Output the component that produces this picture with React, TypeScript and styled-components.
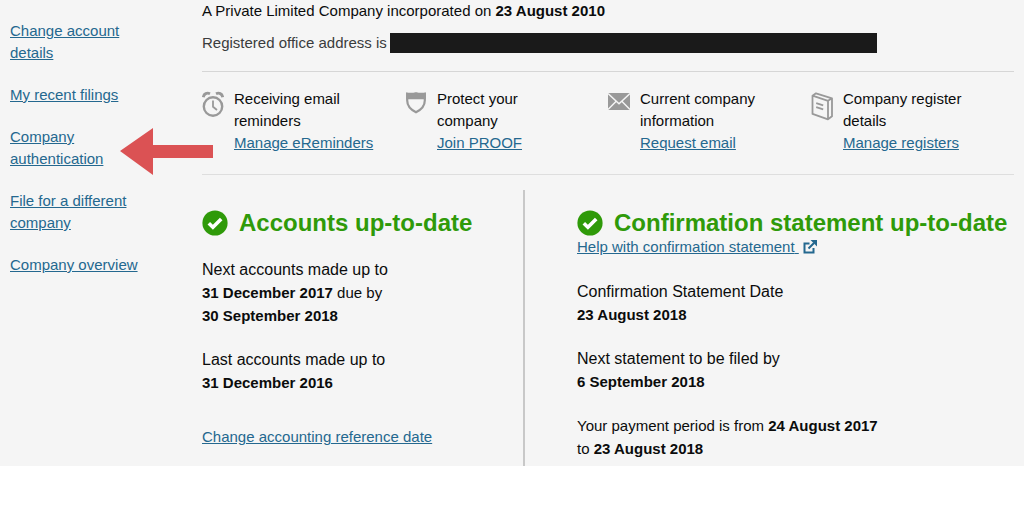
import type { ReactNode } from 'react';
import styled, { createGlobalStyle } from 'styled-components';

const GlobalStyle = createGlobalStyle`
  *, *::before, *::after { box-sizing: border-box; }
  body {
    margin: 0;
    background: #fff;
    color: #0b0c0c;
    font-family: "Liberation Sans", Arial, sans-serif;
    font-size: 15px;
    line-height: 22px;
  }
  p, h2, ul { margin: 0; padding: 0; }
`;

const Page = styled.div`
  display: flex;
  align-items: stretch;
  background: #f5f5f5;
`;

const Sidebar = styled.nav`
  flex: 0 0 202px;
  padding: 20px 63px 0 10px;
`;

const NavList = styled.ul`
  display: flex;
  flex-direction: column;
  gap: 20px;
  list-style: none;
`;

const NavItem = styled.li`
  position: relative;
`;

const Link = styled.a`
  color: #24688f;
  text-decoration: underline;
`;

const Pointer = styled.svg`
  position: absolute;
  left: 110px;
  top: 1px;
  width: 93px;
  height: 48px;
`;

const Main = styled.main`
  flex: 1;
  min-width: 0;
  padding-right: 10px;
`;

const Intro = styled.header`
  display: flex;
  flex-direction: column;
  gap: 10px;
  padding-bottom: 17px;
`;

const Address = styled.div`
  display: flex;
  align-items: center;
  gap: 3px;
  color: #3a3c3d;
  white-space: nowrap;
`;

const Redacted = styled.span`
  flex: 0 1 60%;
  height: 20px;
  background: #1a1a1a;
`;

const Services = styled.section`
  display: grid;
  grid-template-columns: repeat(4, 1fr);
  padding: 16px 0 20px;
  border-top: 1px solid #d6d6d6;
  border-bottom: 1px solid #dedede;
`;

const Service = styled.div`
  display: grid;
  grid-template-columns: 22px 1fr;
  gap: 10px;
  padding-right: 28px;
`;

const ServiceIcon = styled.svg`
  width: 22px;
  height: 34px;
  color: #999;
`;

const Filings = styled.div`
  display: grid;
  grid-template-columns: 321fr 491fr;
  margin-top: 15px;
`;

const Filing = styled.section<{ $divided?: boolean }>`
  padding: 20px 0 6px ${p => (p.$divided ? '52px' : '0')};
  border-left: ${p => (p.$divided ? '2px solid #c8c8c8' : '0')};
`;

const Status = styled.h2`
  display: flex;
  align-items: center;
  gap: 11px;
  color: #2f9a09;
  font-size: 24px;
  line-height: 26px;
  white-space: nowrap;
`;

const Tick = styled.svg`
  flex: none;
  width: 26px;
  height: 26px;
`;

const ExternalIcon = styled.svg`
  width: 14px;
  height: 14px;
  margin-left: 4px;
  vertical-align: -2px;
`;

const Details = styled.div`
  display: flex;
  flex-direction: column;
  gap: 21px;
  margin-top: 22px;
  line-height: 23px;
`;

const Label = styled.span`
  display: block;
  font-size: 16px;
`;

const Footnote = styled.p`
  margin-top: 32px;
`;

function StatusHeading({ children }: { children: ReactNode }) {
  return (
    <Status>
      <Tick viewBox="0 0 26 26" aria-hidden="true">
        <circle cx="13" cy="13" r="12.6" fill="#2f9a09" />
        <path d="M6.8 13.3l4.1 4 8.3-8.4" fill="none" stroke="#fff" strokeWidth="3.6" />
      </Tick>
      {children}
    </Status>
  );
}

const clock = (
  <g fill="none" stroke="currentColor">
    <circle cx="11" cy="18.5" r="9.2" strokeWidth="2.4" />
    <path d="M11 12.5v6.300l4 3.200" strokeWidth="1.800" />
    <path d="M1.300 9.200C1.800 5.600 5 4.400 8 5.800M20.700 9.200C20.200 5.600 17 4.400 14 5.800" strokeWidth="2.800" />
  </g>
);

const shield = (
  <g>
    <path
      d="M2.200 6.200c3 .8 5.800.2 8.800-.4 3 .6 5.800 1.200 8.800.4v6.300c0 5.500-3.800 9.300-8.800 11.700-5-2.400-8.800-6.200-8.800-11.700z"
      fill="none"
      stroke="currentColor"
      strokeWidth="2.200"
    />
    <path d="M1.200 4.200c3.200 1 6.600.5 9.800 0 3.200.5 6.600 1 9.800 0v7H1.200z" fill="currentColor" />
  </g>
);

const envelope = (
  <g>
    <path d="M0 5h22v17H0z" fill="currentColor" />
    <path
      d="M0 5.500l11 10.200 11-10.200M0 21.500l8.200-8.200M22 21.500l-8.200-8.200"
      fill="none"
      stroke="#f5f5f5"
      strokeWidth="1.500"
    />
  </g>
);

const book = (
  <g fill="none" stroke="currentColor" strokeWidth="1.800" strokeLinejoin="round">
    <path d="M1.500 7.700L17 12.800v18.500L1.500 25.900zM1.500 7.700L5 5.300l16 5v18l-4 3M17 12.800l4-2.500" />
    <path d="M5.200 15.200l7 2.200M5.200 19.200l7 2.200" />
  </g>
);

const services = [
  { icon: clock, text: 'Receiving email reminders', link: 'Manage eReminders' },
  { icon: shield, text: 'Protect your company', link: 'Join PROOF' },
  { icon: envelope, text: 'Current company information', link: 'Request email' },
  { icon: book, text: 'Company register details', link: 'Manage registers' },
];

const navigation = [
  { label: 'Change account details' },
  { label: 'My recent filings' },
  { label: 'Company authentication', highlighted: true },
  { label: 'File for a different company' },
  { label: 'Company overview' },
];

export default function App() {
  return (
    <>
      <GlobalStyle />
      <Page>
        <Sidebar aria-label="Company">
          <NavList>
            {navigation.map(item => (
              <NavItem key={item.label}>
                <Link href="#">{item.label}</Link>
                {item.highlighted && (
                  <Pointer viewBox="0 0 93 48" aria-hidden="true">
                    <path d="M0 24L33 1v17h60v13H33v17z" fill="#db5254" />
                  </Pointer>
                )}
              </NavItem>
            ))}
          </NavList>
        </Sidebar>
        <Main>
          <Intro>
            <p>
              A Private Limited Company incorporated on <strong>23 August 2010</strong>
            </p>
            <Address>
              Registered office address is
              <Redacted />
            </Address>
          </Intro>
          <Services>
            {services.map(service => (
              <Service key={service.link}>
                <ServiceIcon viewBox="0 0 22 34" aria-hidden="true">
                  {service.icon}
                </ServiceIcon>
                <div>
                  <p>{service.text}</p>
                  <Link href="#">{service.link}</Link>
                </div>
              </Service>
            ))}
          </Services>
          <Filings>
            <Filing>
              <StatusHeading>Accounts up-to-date</StatusHeading>
              <Details>
                <p>
                  <Label>Next accounts made up to</Label>
                  <strong>31 December 2017</strong> due by
                  <br />
                  <strong>30 September 2018</strong>
                </p>
                <p>
                  <Label>Last accounts made up to</Label>
                  <strong>31 December 2016</strong>
                </p>
              </Details>
              <Footnote>
                <Link href="#">Change accounting reference date</Link>
              </Footnote>
            </Filing>
            <Filing $divided>
              <StatusHeading>Confirmation statement up-to-date</StatusHeading>
              <Link href="#">
                Help with confirmation statement{' '}
                <ExternalIcon viewBox="0 0 14 14" aria-hidden="true">
                  <path
                    d="M6.5 3.5H1.500v9h9V8M5.500 8.500l5.500-5.500"
                    fill="none"
                    stroke="currentColor"
                    strokeWidth="2"
                  />
                  <path d="M7.500 0H14v6.500z" fill="currentColor" />
                </ExternalIcon>
              </Link>
              <Details>
                <p>
                  <Label>Confirmation Statement Date</Label>
                  <strong>23 August 2018</strong>
                </p>
                <p>
                  <Label>Next statement to be filed by</Label>
                  <strong>6 September 2018</strong>
                </p>
                <p>
                  Your payment period is from <strong>24 August 2017</strong>
                  <br />
                  to <strong>23 August 2018</strong>
                </p>
              </Details>
            </Filing>
          </Filings>
        </Main>
      </Page>
    </>
  );
}
